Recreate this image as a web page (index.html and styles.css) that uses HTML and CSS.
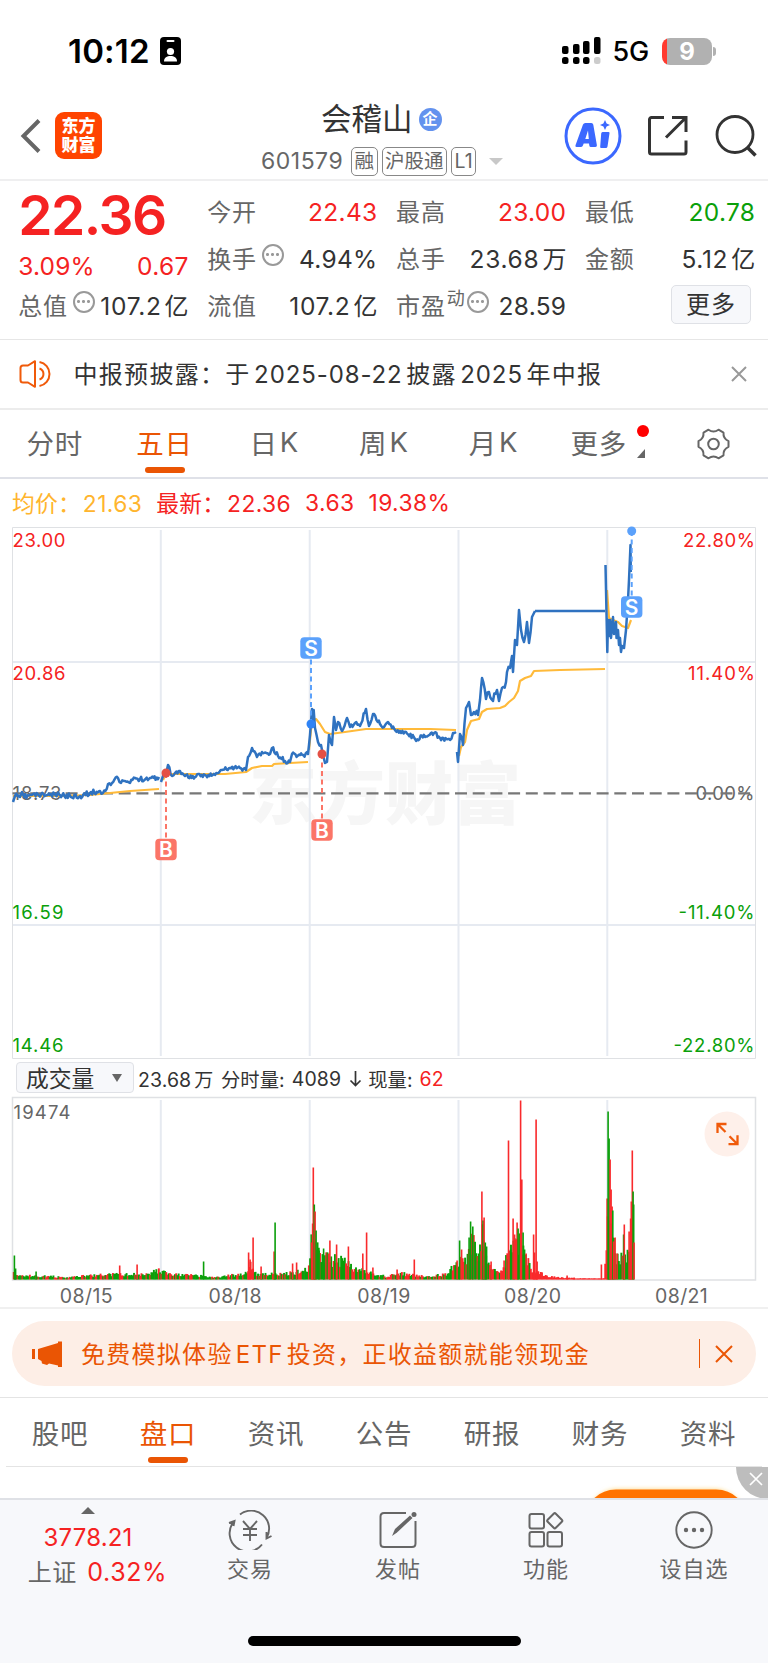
FILE: index.html
```html
<!DOCTYPE html>
<html lang="zh-CN">
<head>
<meta charset="utf-8">
<title>会稽山 601579</title>
<link rel="stylesheet" href="styles.css">
</head>
<body>
<div class="app">
  <div class="status">
    <span class="time">10:12</span>
    <svg class="idcard" width="21" height="28" viewBox="0 0 21 28"><rect width="21" height="28" rx="4"/><rect x="6.5" y="3" width="8" height="2" rx="1" fill="#fff"/><circle cx="10.5" cy="14.5" r="3.6" fill="#fff"/><path d="M4 24.5c0-4 3-5.500 6.500-5.500s6.500 1.500 6.500 5.500z" fill="#fff"/></svg>
    <svg class="signal" width="39" height="28" viewBox="0 0 39 28"><rect y="9" width="6.500" height="8" rx="2"/><rect x="11" y="7" width="6.500" height="10" rx="2"/><rect x="21" y="4" width="6.500" height="13" rx="2"/><rect x="32" y="0" width="6.500" height="17" rx="2"/><rect y="20" width="6.500" height="7" rx="2.500"/><rect x="11" y="20" width="6.500" height="7" rx="2.500"/><rect x="21" y="20" width="6.500" height="7" rx="2.500"/><rect x="32" y="20" width="6.500" height="7" rx="2.500" fill="#ccc"/></svg>
    <span class="net">5G</span>
    <span class="battery"><b>9</b></span><i class="bat-tip"></i>
  </div>

  <header class="header">
    <svg class="back" width="22" height="36" viewBox="0 0 22 36"><path d="M19 2.500 3.500 18 19 33.500" fill="none" stroke="#666" stroke-width="4"/></svg>
    <div class="logo"><span>东方</span><span>财富</span></div>
    <div class="title">
      <div class="name">会稽山<span class="corp">企</span></div>
      <div class="code"><span class="num">601579</span><span class="tag">融</span><span class="tag">沪股通</span><span class="tag">L1</span><i class="down"></i></div>
    </div>
    <svg class="ai" width="58" height="58" viewBox="0 0 58 58"><circle cx="29" cy="29" r="27" fill="#fff" stroke="#3b68ff" stroke-width="3"/><g fill="#3b68ff"><path fill-rule="evenodd" d="M19 17.500q.7-1.500 2.300-1.500h6q1.700 0 2 1.700l3.600 20.500q.2 1.800-1.500 1.800h-4.500q-1.400 0-1.600-1.500l-.3-2h-5.300l-.9 2.300q-.6 1.200-2 1.200h-4.300q-1.600 0-1-1.700zM24 23.500l-2.700 8.500h3.500z"/><path d="M38.500 25h6q1.200 0 1 1.300l-2 13.200q-.2 1.500-1.700 1.500h-4.600q-1.300 0-1-1.500l1-13q.2-1.500 1.300-1.500z"/><path d="m41 13 1.600 3.500L46 18l-3.400 1.500L41 23l-1.600-3.500L36 18l3.400-1.500z"/></g></svg>
    <svg class="share" width="42" height="42" viewBox="0 0 42 42" fill="none" stroke="#333" stroke-width="3"><path d="M17 2.500H4.500a2 2 0 0 0-2 2V37a2 2 0 0 0 2 2H37a2 2 0 0 0 2-2V25.500M25 2.500h14V17M39 2.500l-20 20"/></svg>
    <svg class="search" width="42" height="42" viewBox="0 0 42 42" fill="none" stroke="#333" stroke-width="2.800"><circle cx="20" cy="19.500" r="18"/><path d="m32 32 8.500 8.500" stroke-width="3.500"/></svg>
  </header>

  <section class="quote">
    <div class="qcol">
      <div class="last">22.36</div>
      <div class="qrow chg red"><b>3.09%</b><span>0.67</span></div>
      <div class="qrow"><label>总值</label><i class="dots"></i><span class="unit">107.2<em>亿</em></span></div>
    </div>
    <div class="qcol">
      <div class="qrow"><label>今开</label><span class="red">22.43</span></div>
      <div class="qrow"><label>换手</label><i class="dots"></i><span>4.94%</span></div>
      <div class="qrow"><label>流值</label><span class="unit">107.2<em>亿</em></span></div>
    </div>
    <div class="qcol">
      <div class="qrow"><label>最高</label><span class="red">23.00</span></div>
      <div class="qrow"><label>总手</label><span class="unit">23.68<em>万</em></span></div>
      <div class="qrow"><label>市盈</label><sup>动</sup><i class="dots tight"></i><span>28.59</span></div>
    </div>
    <div class="qcol">
      <div class="qrow"><label>最低</label><span class="green">20.78</span></div>
      <div class="qrow"><label>金额</label><span class="unit">5.12<em>亿</em></span></div>
      <div class="qrow end"><button class="more">更多</button></div>
    </div>
  </section>

  <div class="notice">
    <svg width="34" height="28" viewBox="0 0 34 28" fill="none" stroke="#f05a0a" stroke-width="2"><path d="M16 1.200v25.600L9 22.500H4Q1.500 22.500 1.500 20V8Q1.500 5.500 4 5.500h5z" stroke-linejoin="round"/><path d="M20.500 8.500a5.800 5.800 0 0 1 0 11M20.500 2a12.200 12.200 0 0 1 0 24"/></svg>
    <p>中报预披露：于<span>2025-08-22</span>披露<span>2025</span>年中报</p>
    <svg width="16" height="16" viewBox="0 0 16 16"><path d="m1 1 14 14M15 1 1 15" stroke="#999" stroke-width="2"/></svg>
  </div>

  <nav class="tabs period">
    <a>分时</a><a class="on">五日</a><a>日<span>K</span></a><a>周<span>K</span></a><a>月<span>K</span></a>
    <a class="more-tab">更多<i class="red-dot"></i><i class="corner"></i></a>
    <a class="gear"><svg width="33" height="32" viewBox="0 0 33 32" fill="none" stroke="#666" stroke-width="2"><circle cx="16.500" cy="16" r="5.300"/><path d="M11.500 1.700q5 3.500 10 0l5 3q-.5 6 5 8.500v5.600q-5.500 2.500-5 8.500l-5 3q-5-3.500-10 0l-5-3q.5-6-5-8.500v-5.600q5.500-2.500 5-8.500z" stroke-linejoin="round"/></svg></a>
  </nav>

  <div class="averages"><span class="avg">均价：<b>21.63</b></span><span class="red">最新：<b>22.36</b></span><b class="red">3.63</b><b class="red">19.38%</b></div>

  <svg class="price" id="price" width="768" height="533" viewBox="0 526 768 533">
    <g class="watermark"><text x="249" y="819" textLength="272">东方财富</text></g>
    <g class="grid"><path d="M12 662h744M12 925h744M160.800 530v526M309.700 530v526M458.500 530v526M607.300 530v526"/></g>
    <path class="frame" d="M12.500 527.500h743v531h-743z"/>
    <g class="axis">
      <text class="r" x="12.500" y="547" textLength="53">23.00</text><text class="r" x="12.500" y="679.500" textLength="53">20.86</text>
      <text class="k" x="12.500" y="799.500" textLength="49">18.73</text>
      <text class="g" x="12.500" y="919" textLength="51">16.59</text><text class="g" x="12.500" y="1051.500" textLength="51">14.46</text>
      <text class="r" x="683" y="547" textLength="72">22.80%</text><text class="r" x="688" y="679.500" textLength="67">11.40%</text>
      <text class="k" x="695.500" y="799.500" textLength="59">0.00%</text>
      <text class="g" x="678.500" y="919" textLength="76">-11.40%</text><text class="g" x="673.500" y="1051.500" textLength="81">-22.80%</text>
    </g>
    <path d="M12.500 793.300h742" stroke="#777" stroke-width="2.200" stroke-dasharray="12 5.700"/>
    <g id="lines" fill="none" stroke-width="2.200" stroke-linejoin="round"></g>
    <g id="marks"></g>
  </svg>

  <div class="volbar"><button>成交量<i></i></button><span>23.68<em>万</em></span><span class="u">分时量:</span><span>4089</span><svg width="13" height="16" viewBox="0 0 13 16" fill="none" stroke="#333" stroke-width="1.700"><path d="M6.500 0v14.500M1.500 9.500l5 5 5-5"/></svg><span class="u">现量:</span><span class="red">62</span></div>

  <svg class="volume" width="768" height="185" viewBox="0 1096 768 185">
    <g class="grid"><path d="M160.800 1100v178M309.700 1100v178M458.500 1100v178M607.300 1100v178"/></g>
    <path class="frame" d="M12.500 1097.500h743v182.500h-743z" stroke-width="1.500"/>
    <g class="axis"><text class="k" x="13.500" y="1119" textLength="57">19474</text></g>
    <g id="bars"></g>
    <circle cx="727" cy="1134" r="22.500" fill="#fef0ea"/>
    <path d="M717.500 1133v-9h9M717.500 1124l8 8M728.500 1144.200h9v-9M737.500 1144.200l-8-8" fill="none" stroke="#f05a0a" stroke-width="2.300"/>
  </svg>
  <div class="dates"><span>08/15</span><span>08/18</span><span>08/19</span><span>08/20</span><span>08/21</span></div>

  <div class="banner">
    <svg width="30" height="26" viewBox="0 0 30 26" fill="#ea5504"><path d="M0 8h3v10H0zM6 8l20-6V0.500h4v25.500h-4v-1.500l-9-2-2 1.500-5-1.500-.5-2.500L6 18z"/></svg>
    <p>免费模拟体验<span>ETF</span>投资，正收益额就能领现金</p>
    <i></i>
    <svg width="18" height="18" viewBox="0 0 18 18"><path d="m1 1 16 16M17 1 1 17" stroke="#ea5504" stroke-width="2"/></svg>
  </div>

  <nav class="tabs info"><a>股吧</a><a class="on">盘口</a><a>资讯</a><a>公告</a><a>研报</a><a>财务</a><a>资料</a></nav>
  <div class="peek">
    <svg width="768" height="32" viewBox="0 0 768 32"><defs><filter id="glow" x="-10%" y="-30%" width="120%" height="160%"><feGaussianBlur stdDeviation="2"/></filter></defs><rect x="586" y="22" width="160" height="70" rx="32" fill="#ffd98a" filter="url(#glow)"/><path d="M590 36Q600 22.500 616 22.500H716Q732 22.500 742 36z" fill="#ff7200"/><path d="M736 0h32v32A32 32 0 0 1 736 0z" fill="#bdbdbd"/><path d="m762 6-12 12M750 6l12 12" stroke="#fff" stroke-width="1.700"/></svg>
  </div>

  <footer class="footer">
    <div class="index"><i></i><b class="red">3778.21</b><span>上证 <b class="red">0.32%</b></span></div>
    <div class="item"><svg width="44" height="40" viewBox="0 0 44 40" fill="none" stroke="#666" stroke-width="1.900"><path d="M12 4.500A18 18 0 0 1 38.500 28M43.500 26l-5 2.500V22M34 34.500A18 18 0 0 1 5.500 12M1 13l5.500-2-1 5"/><path d="m15 11 7 8 7-8M22 19v12M15 19h14M15 25h14"/></svg><span>交易</span></div>
    <div class="item"><svg width="40" height="40" viewBox="0 0 40 40" fill="none" stroke="#666" stroke-width="2"><path d="M28 3H6Q2.500 3 2.500 6.500v27Q2.500 37 6 37h28q3.500 0 3.500-3.500V11"/><path d="m14 26 3-7L32 5.500l2.500 2.500L19 22.500z" fill="#666" stroke="none"/><circle cx="36" cy="4.500" r="2.500" fill="#666" stroke="none"/></svg><span>发帖</span></div>
    <div class="item"><svg width="36" height="40" viewBox="0 0 36 40" fill="none" stroke="#666" stroke-width="2"><rect x="1.500" y="4" width="14.500" height="14.500" rx="2"/><rect x="1.500" y="22" width="14.500" height="14.500" rx="2"/><rect x="19.500" y="22" width="14.500" height="14.500" rx="2"/><rect x="21" y="5" width="11.500" height="11.500" rx="1.500" transform="rotate(45 26.750 10.750)"/></svg><span>功能</span></div>
    <div class="item"><svg width="40" height="40" viewBox="0 0 40 40"><circle cx="20" cy="20" r="17.700" fill="none" stroke="#666" stroke-width="1.900"/><g fill="#666"><circle cx="12" cy="20" r="2.200"/><circle cx="20" cy="20" r="2.200"/><circle cx="28" cy="20" r="2.200"/></g></svg><span>设自选</span></div>
    <i class="home"></i>
  </footer>
</div>
<script src="chart.js"></script>
</body>
</html>
```
FILE: styles.css
```css
* { box-sizing: border-box; }
body { margin: 0; background: #fff; }
.app { width: 768px; height: 1663px; overflow: hidden; font-family: Inter, "Noto Sans CJK SC", sans-serif; color: #333; display: flex; flex-direction: column; }
.app > * { flex: none; }
i, em { font-style: normal; }
b { font-weight: 400; }
button { font: inherit; color: inherit; padding: 0; }
svg { display: block; flex: none; }
.red { color: #f52222; }
.green { color: #0aa00a; }

.status { height: 92px; padding: 10px 55px 0 68px; display: flex; align-items: center; color: #000; }
.time { font-size: 33px; font-weight: 600; width: 92px; letter-spacing: .2px; white-space: nowrap; }
.idcard { margin-right: auto; }
.net { font-size: 27px; font-weight: 500; width: 49px; padding-left: 11.500px; white-space: nowrap; letter-spacing: -.2px; }
.battery { margin-left: 12px; width: 50px; height: 27px; border-radius: 8px; background: linear-gradient(90deg, #ff3b30 5px, #b1b1b1 5px); display: flex; align-items: center; justify-content: center; color: #fff; font-size: 24px; }
.battery b { font-weight: 700; }
.bat-tip { width: 3px; height: 9px; margin: 0 -3px 0 1px; border-radius: 0 4px 4px 0; background: #b1b1b1; }

.header { height: 89px; border-bottom: 2px solid #efeff0; display: flex; align-items: center; padding: 0 11px 0 20px; }
.logo { margin-left: 13px; width: 47px; height: 47px; border-radius: 9px; background: #ff4400; color: #fff; display: flex; flex-direction: column; align-items: center; justify-content: center; font-weight: 900; font-size: 17px; line-height: 19px; }
.title { width: 300px; margin-left: 132px; height: 87px; display: flex; flex-direction: column; }
.name { height: 42px; margin-top: 6px; font-size: 30.5px; line-height: 42px; display: flex; align-items: center; padding-left: 87px; }
.corp { width: 23px; height: 23px; margin-left: 6px; border-radius: 50%; background: #6392ee; color: #fff; font-size: 15px; line-height: 22px; font-weight: 700; text-align: center; }
.code { display: flex; align-items: center; gap: 4px; margin-top: 5px; padding-left: 27px; height: 32px; font-size: 23px; color: #666; }
.num { width: 86px; letter-spacing: .5px; }
.tag { height: 29px; border: 1.500px solid #888; border-radius: 5px; padding: 0 2.500px; font-size: 19.500px; line-height: 27px; white-space: nowrap; }
.down { border: 7px solid transparent; border-top-color: #c8c8c8; border-bottom: 0; margin-left: 9px; }
.ai { margin-left: 30px; }
.share { margin-left: 25px; }
.search { margin-left: auto; }

.quote { height: 158px; display: grid; grid-template-columns: 170px 170px 170px 170px; column-gap: 18.900px; padding: 8px 0 0 18.300px; font-size: 24.500px; letter-spacing: .15px; }
.qcol { height: 141px; display: flex; flex-direction: column; }
.qrow { height: 47px; display: flex; align-items: center; line-height: 47px; white-space: nowrap; }
.qrow span { margin-left: auto; letter-spacing: .3px; margin-right: -.3px; }
.qrow .unit { letter-spacing: .7px; }
.qrow em { margin-left: 3px; font-size: 24px; letter-spacing: 0; }
.qrow label { color: #666; font-size: 24px; letter-spacing: .8px; }
.last { height: 54px; line-height: 52px; font-size: 55px; font-weight: 600; color: #f52222; letter-spacing: -1.500px; }
.chg { height: 40px; line-height: 40px; padding-top: 5px; }
.dots { width: 22px; height: 22px; margin: -10px 0 0 5px; border: 2px solid #999; border-radius: 50%; background: radial-gradient(circle, #999 1.200px, transparent 1.800px) center/5px 5px no-repeat, radial-gradient(circle, #999 1.200px, transparent 1.800px) 1.500px center/5px 5px no-repeat, radial-gradient(circle, #999 1.200px, transparent 1.800px) 11.500px center/5px 5px no-repeat; }
.dots.tight { margin-left: 2px; }
.qrow sup { font-size: 18px; line-height: 20px; color: #666; margin: -16px 0 0 1px; }
.qrow.end { justify-content: flex-end; padding-right: 4px; }
.more { width: 80px; height: 39px; margin-top: -4px; border: 1.500px solid #dfe1e6; border-radius: 5px; background: #f7f8fb; font-size: 24px; line-height: 36px; letter-spacing: 1px; }

.notice { height: 71px; border-top: 1px solid #e6e6e6; border-bottom: 2px solid #ececec; padding: 0 21px 0 19px; display: flex; align-items: center; font-size: 24px; }
.notice p { margin: 0 auto 0 20.500px; padding-bottom: 4px; letter-spacing: 1.300px; white-space: nowrap; }
.notice span { margin: 0 3.500px; letter-spacing: .9px; }

.tabs { display: flex; font-size: 27.500px; color: #666; }
.tabs a { flex: 1; display: flex; justify-content: center; align-items: center; position: relative; letter-spacing: .8px; }
.tabs span { margin-left: 2px; }
.tabs .on { color: #ea5504; }
.tabs .on::after { content: ""; position: absolute; bottom: 4px; width: 40px; height: 6px; border-radius: 3px; background: #ea5504; }
.period { height: 69px; border-bottom: 2px solid #dfe1e8; }
.period a { flex: 0 0 109.700px; padding-bottom: 3px; }
.period .more-tab { padding-right: 9px; }
.period .gear { padding: 0 0 0 1px; }
.red-dot { position: absolute; right: 9.500px; top: 15px; width: 12px; height: 12px; border-radius: 50%; background: #f00; }
.corner { position: absolute; right: 13.500px; bottom: 19px; border-left: 8px solid transparent; border-bottom: 9px solid #666; }

.averages { height: 47px; display: flex; align-items: center; padding-left: 12px; font-size: 22.800px; letter-spacing: .15px; white-space: nowrap; }
.averages > * { margin-right: 14px; }
.averages b { margin-left: 2px; letter-spacing: .4px; }
.averages > b { margin-left: 0; }
.avg { color: #ffb52e; }
.watermark text { font: 900 68px "Noto Sans CJK SC", sans-serif; fill: #f6f6f6; }
.grid path { stroke: #e6eaf1; stroke-width: 2; fill: none; }
.frame { fill: none; stroke: #dfe1e4; }
.axis text { font-size: 18.500px; }
.axis .r { fill: #f52222; }
.axis .g { fill: #0aa00a; }
.axis .k { fill: #666; }
.mark { font: 600 21px Inter, sans-serif; fill: #fff; text-anchor: middle; }

.volbar { height: 37px; display: flex; align-items: center; padding: 2px 0 0 16px; font-size: 19.500px; white-space: nowrap; }
.volbar button { width: 118px; height: 31px; margin: -2px 4px 0 0; border: 1.500px solid #dfe1e6; border-radius: 4px; background: #f7f8fb; font-size: 22.800px; line-height: 28px; display: flex; align-items: center; padding: 2px 0 0 9px; }
.volbar button i { margin: -2px 0 0 18px; border: 5px solid transparent; border-top: 8px solid #666; border-bottom: 0; }
.volbar em { margin-left: 3px; font-size: 19px; }
.volbar span { margin-right: 7.500px; letter-spacing: .1px; }
.volbar svg { margin-right: 6.500px; }
.volbar .u { font-size: 19.300px; margin-right: 7px; }
.dates { height: 28px; padding: 0 12px; display: grid; grid-template-columns: repeat(5, 1fr); text-align: center; font-size: 19.500px; line-height: 30px; color: #666; letter-spacing: .4px; border-bottom: 2px solid #f0f0f0; }

.banner { margin: 12px 12px 0; height: 65px; border-radius: 33px; background: #fdeee6; color: #ea5504; display: flex; align-items: center; padding: 0 23px 0 20px; font-size: 24px; }
.banner p { margin: 0 auto 0 19px; padding-bottom: 3px; letter-spacing: 1.280px; white-space: nowrap; }
.banner span { margin: 0 3px; }
.banner i { width: 1.500px; height: 29px; background: #ea5504; margin-right: 15px; }
.info { margin-top: 11px; height: 70px; border-top: 1px solid #e4e4e4; padding: 0 6px; }
.info a { border-bottom: 1px solid #e4e4e4; }
.info .on::after { bottom: 3px; }
.peek { height: 31px; overflow: hidden; }
.footer { height: 166px; border-top: 2px solid #dfe1e6; background: #f7f8fb; display: flex; color: #666; position: relative; }
.index { width: 176px; display: flex; flex-direction: column; align-items: center; font-size: 24px; line-height: 34px; padding-top: 7px; }
.index > i { border: 7px solid transparent; border-top: 0; border-bottom: 7px solid #666; }
.index > b { height: 34px; margin-top: 6px; line-height: 36px; letter-spacing: .2px; }
.index span { padding: 1px 0 0 19px; letter-spacing: .6px; white-space: nowrap; }
.index span b { margin-left: 3px; font-size: 25px; }
.item { width: 148px; height: 100px; display: flex; flex-direction: column; align-items: center; padding-top: 10px; font-size: 22px; line-height: 34px; }
.item span { margin-top: 2px; letter-spacing: 1px; }
.home { position: absolute; left: 248px; top: 136px; width: 273px; height: 10px; border-radius: 5px; background: #000; }
```
FILE: chart.js
```js
const NS = 'http://www.w3.org/2000/svg';
function add(parent, tag, attrs, text) {
  const el = document.createElementNS(NS, tag);
  for (const k in attrs) el.setAttribute(k, attrs[k]);
  if (text) el.textContent = text;
  parent.appendChild(el);
  return el;
}
let seed = 11;
const rnd = () => (seed = (seed * 16807) % 2147483647) / 2147483647;
const lines = document.getElementById('lines');

function toPath(pts, amp) {
  let d = '';
  for (let i = 0; i < pts.length; i++) {
    const [x, y] = pts[i];
    d += (i ? 'L' : 'M') + x + ' ' + y;
    const n = pts[i + 1];
    if (!n || !amp) continue;
    const steps = Math.floor((n[0] - x) / 1.1);
    for (let s = 1; s < steps; s++) {
      const t = s / steps;
      d += 'L' + (x + (n[0] - x) * t).toFixed(1) + ' ' + (y + (n[1] - y) * t + (rnd() - .5) * 2 * amp).toFixed(1);
    }
  }
  return d;
}

const average = [
  [[13,796],[60,796],[90,795],[110,793],[130,791],[159,789]],
  [[163,780],[166,774],[190,774],[225,774],[246,772],[252,768],[262,766],[272,766],[274,764],[290,763],[308,762]],
  [[309,750],[312,720],[316,719],[320,724],[325,732],[330,734],[345,732],[366,729],[384,729],[430,729],[456,730]],
  [[459,756],[461,747],[465,742],[467,730],[471,721],[479,719],[482,712],[487,709],[500,708],[505,706],[509,702],[514,698],[518,691],[520,681],[525,678],[531,676],[534,671],[560,670],[605,669]],
  [[607,590],[609,618],[613,620],[618,622],[622,626],[628,628],[631,620]]
];
average.forEach(p => add(lines, 'path', { d: toPath(p, 0), stroke: '#ffba3a' }));

const price = [
  [[[13,802],[15,796],[20,797],[22,792],[24,797],[30,795],[50,795],[60,795],[70,796],[80,796],[90,793],[100,791],[103,793],[108,784],[112,783],[118,778],[121,783],[125,781],[130,783],[135,778],[140,779],[150,778],[159,777]], 2.6],
  [[[161,782],[163,776],[166,774],[168,765],[172,776],[175,773],[180,771],[185,776],[195,777],[205,775],[215,775],[222,770],[230,768],[240,768],[246,770],[248,757],[252,748],[257,757],[262,752],[270,754],[272,748],[278,756],[285,761],[290,762],[292,754],[300,755],[308,754],[309,745],[310,735],[312,709],[313,722],[313.700,710],[315,728],[318,742],[321,745],[323,755],[325,763],[327,762],[329,735],[332,745],[334,717],[336,730],[338,722],[342,731],[347,718],[350,727],[355,723],[360,726],[366,709],[369,726],[373,714],[380,724],[384,727],[388,722],[392,728],[400,731],[406,732],[415,739],[425,737],[434,733],[440,738],[450,740],[453,733],[456,732]], 2.3],
  [[[457,752],[458,762],[460,734],[462,738],[463,745],[466,708],[469,702],[471,715],[474,712],[478,715],[480,700],[481,688],[482,678],[486,699],[489,692],[493,701],[497,690],[499,701],[502,688],[506,682],[507,672],[510,668],[512,656],[513,672],[515,640],[517,645],[519,610],[521,630],[524,642],[527,622],[529,643],[532,617],[534,613],[535,611]], 4],
  [[[535,611],[605,611]], 0],
  [[[605.500,565],[607.300,652],[608,620],[609,636],[610,620],[611,638],[613,617],[614,634],[616,622],[616.500,638],[618,630],[619,645],[620,638],[621,652],[622,646],[624,648],[626,630],[628,600],[629,580],[630.500,545],[630.800,572]], 2]
];
price.forEach(([p, a]) => add(lines, 'path', { d: toPath(p, a), stroke: '#2f72c0', 'stroke-width': 2.500 }));

const marks = document.getElementById('marks');
function mark(x, dotY, boxY, label, color, dot) {
  add(marks, 'path', { d: `M${x} ${dotY}V${boxY}`, stroke: color, 'stroke-width': 2, 'stroke-dasharray': '5 3.500' });
  add(marks, 'circle', { cx: x, cy: dotY, r: 4.500, fill: dot });
  add(marks, 'rect', { x: x - 10.700, y: boxY - 10.700, width: 21.400, height: 21.400, rx: 4, fill: color });
  add(marks, 'text', { x, y: boxY + 7.500, class: 'mark' }, label);
}
mark(166, 773, 849.500, 'B', '#fb7567', '#e45045');
mark(322, 754, 830, 'B', '#fb7567', '#e45045');
mark(311, 724, 648, 'S', '#5ba1fb', '#2f83f5');
mark(631.700, 531, 607, 'S', '#5ba1fb', '#5ba1fb');

const bars = document.getElementById('bars');
const R = '#f92a2c', G = '#0a9f0a';
const bar = (x, h, c, w) => add(bars, 'rect', { x: x - .7, y: 1279.500 - h, width: w || 1.600, height: h, fill: c });

/* typical bar height along the time axis */
const level = [[13,8],[16,4],[55,3],[65,1.500],[76,3],[110,5],[140,5],[160,9],[170,5],[195,4],[215,2],[245,6],[250,15],[256,5],[285,6],[300,8],[309,12],[311,42],[315,35],[320,24],[330,20],[340,19],[355,10],[372,6],[386,3],[400,6],[425,3],[445,5],[456,15],[462,20],[466,25],[471,42],[478,20],[482,42],[487,18],[492,11],[500,9],[508,22],[514,35],[520,37],[526,20],[532,10],[540,6],[548,3],[565,2],[575,1],[604,1],[606,35],[608,60],[612,40],[616,22],[620,20],[624,26],[627,22],[631,42],[634,32]];
let k = 0;
for (let x = 13.500; x < 633.500; x += 1.240) {
  while (k < level.length - 2 && level[k + 1][0] < x) k++;
  const [x0, h0] = level[k], [x1, h1] = level[k + 1];
  const h = h0 + (h1 - h0) * Math.min(1, (x - x0) / (x1 - x0));
  const onlyUp = x > 530 && x < 606 || x > 247 && x < 254;
  bar(x, Math.max(1, h * (.6 + rnd() * .75)), onlyUp || rnd() < .36 ? R : G, 1.900);
}
[[14.300,24,G],[15.500,11,G],[36,8,G],[119.600,14,R],[137,15,R],[203.500,18,G],[248.500,27,R],[250,20,R],[253,42,R],[274,28,R],[275,57,G],[261,13,R],[292.500,16,R],[296.500,17,R],
[311.500,37,R],[312.500,56,R],[313.200,112,R],[314.200,75,G],[315,68,R],[316,49,G],[319,29,G],[323.500,31,G],[329.800,39,R],[336.500,35,R],[348.300,33,R],[362.700,26,R],[366.500,47,R],[372.800,12,R],
[397,10,R],[414.200,20,R],[457,19,R],[459.500,39,G],[461.500,30,R],[469,42,G],[470.500,58,G],[472.700,53,G],[481.800,88,R],[483,59,G],[484,62,R],[485.200,37,G],[486.500,33,G],[478.500,26,G],[491,18,R],[504,19,R],
[508.400,139,R],[510.500,30,G],[513,61,R],[514.500,45,R],[517,57,R],[518,51,G],[520.500,179,R],[521.700,100,R],[523,47,G],[524.500,30,G],[526,26,R],[533.500,45,R],[534.500,27,R],[536,160,R],[537,18,R],
[601.300,15,R],[607,81,R],[609,141,G],[608,168,G],[610,120,R],[611,90,R],[612,73,R],[612.700,69,G],[613.500,38,R],[615,42,R],[617,26,R],[623.500,45,G],[624.200,55,R],[629,48,R],[630.500,61,R],[631.200,78,R],[632.200,129,R],[633,88,G],[633.600,75,G],[634,37,R],
[567,4,R],[574,2,R]].forEach(b => bar(...b));
```
